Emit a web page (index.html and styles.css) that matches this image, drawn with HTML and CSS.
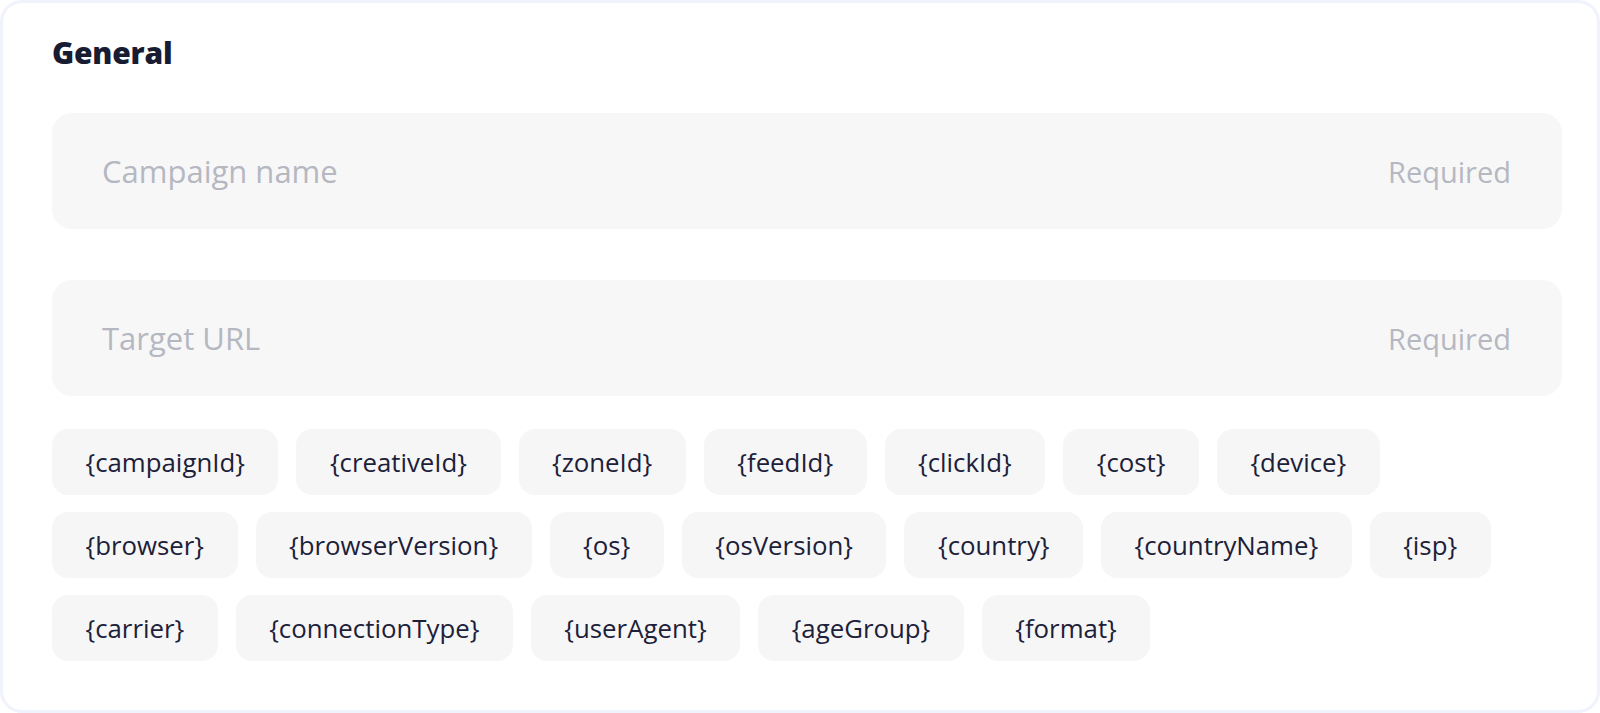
FILE: index.html
```html
<!DOCTYPE html>
<html lang="en">
<head>
<meta charset="utf-8">
<title>General</title>
<link rel="stylesheet" href="styles.css">
</head>
<body>
<section class="card">
  <h2 class="title">General</h2>
  <div class="field field-first">
    <span class="placeholder">Campaign name</span>
    <span class="hint">Required</span>
  </div>
  <div class="field field-second">
    <span class="placeholder">Target URL</span>
    <span class="hint">Required</span>
  </div>
  <div class="macros">
    <div class="macro-row">
      <span class="chip">{campaignId}</span>
      <span class="chip">{creativeId}</span>
      <span class="chip">{zoneId}</span>
      <span class="chip">{feedId}</span>
      <span class="chip">{clickId}</span>
      <span class="chip">{cost}</span>
      <span class="chip">{device}</span>
    </div>
    <div class="macro-row">
      <span class="chip">{browser}</span>
      <span class="chip">{browserVersion}</span>
      <span class="chip">{os}</span>
      <span class="chip">{osVersion}</span>
      <span class="chip">{country}</span>
      <span class="chip">{countryName}</span>
      <span class="chip">{isp}</span>
    </div>
    <div class="macro-row">
      <span class="chip">{carrier}</span>
      <span class="chip">{connectionType}</span>
      <span class="chip">{userAgent}</span>
      <span class="chip">{ageGroup}</span>
      <span class="chip">{format}</span>
    </div>
  </div>
</section>
</body>
</html>
```

FILE: styles.css
```css
html, body {
  margin: 0;
  padding: 0;
  background: #ffffff;
}

body {
  font-family: "Open Sans", "Noto Sans", sans-serif;
  width: 1600px;
  height: 713px;
  overflow: hidden;
}

.card {
  box-sizing: border-box;
  width: 1600px;
  height: 713px;
  border: 3px solid #f0f2fc;
  border-radius: 22px;
  background: #ffffff;
  padding: 30px 35px 0 49px;
}

.title {
  margin: 0;
  font-size: 30px;
  line-height: 40px;
  font-weight: 800;
  color: #171c33;
  letter-spacing: -0.2px;
}

.field {
  height: 116px;
  border-radius: 20px;
  background: #f7f7f8;
  display: flex;
  align-items: center;
  justify-content: space-between;
  padding: 0 51px 0 50px;
  box-sizing: border-box;
  color: #b5b8c1;
}

.placeholder {
  font-size: 31px;
}

.hint {
  font-size: 29px;
}

.field-first {
  margin-top: 40px;
}

.field-second {
  margin-top: 51px;
}

.macros {
  margin-top: 33px;
  display: flex;
  flex-direction: column;
  gap: 17px;
}

.macro-row {
  display: flex;
  gap: 18px;
}

.chip {
  height: 66px;
  box-sizing: border-box;
  padding: 0 33.5px;
  border-radius: 16px;
  background: #f6f6f7;
  display: inline-flex;
  align-items: center;
  font-size: 25.8px;
  color: #1c2139;
  white-space: nowrap;
}
```
